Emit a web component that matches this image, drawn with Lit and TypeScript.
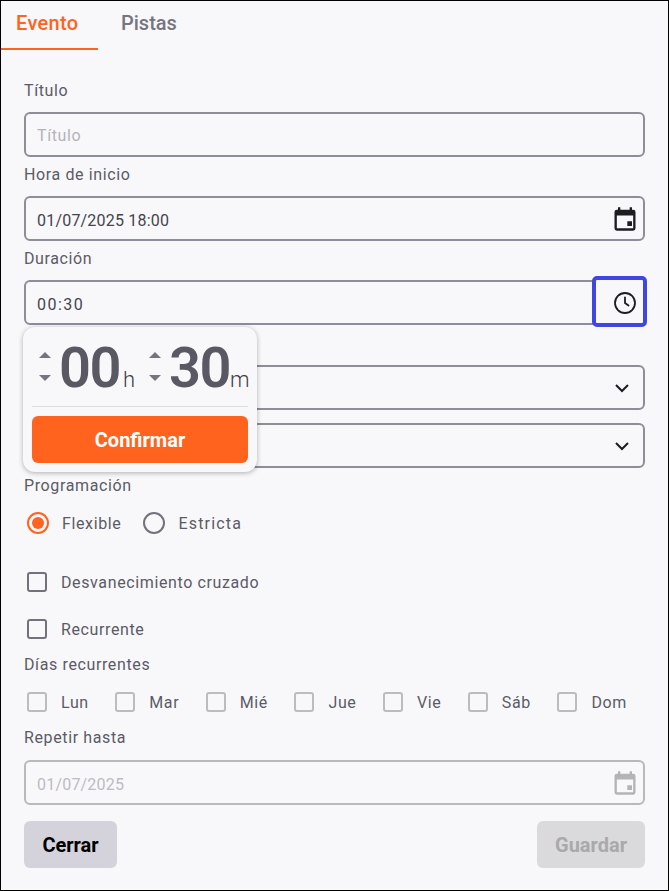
import { LitElement, css, html, svg } from "lit";
import { customElement } from "lit/decorators.js";

const calendarIcon = svg`<path fill="currentColor" d="M19 4h-1V2h-2v2H8V2H6v2H5a2 2 0 0 0-2 2v14a2 2 0 0 0 2 2h14a2 2 0 0 0 2-2V6a2 2 0 0 0-2-2zm0 16H5V9h14v11zm-5-6h4v4h-4z"/>`;

const DAYS = ["Lun", "Mar", "Mié", "Jue", "Vie", "Sáb", "Dom"];

@customElement("app-root")
export class AppRoot extends LitElement {
  static styles = css`
    :host {
      display: block;
      box-sizing: border-box;
      width: 669px;
      height: 891px;
      background: #f8f8fb;
      border: 1px solid #000;
      font-family: Roboto, "Liberation Sans", sans-serif;
      font-size: 16px;
      letter-spacing: 0.62px;
      color: #5c5b65;
    }
    .tabs {
      display: flex;
      height: 49px;
    }
    .tab {
      box-sizing: border-box;
      padding: 10px 20px 0 15px;
      font-size: 20px;
      font-weight: 500;
      letter-spacing: 0;
      color: #75747f;
      line-height: 24px;
    }
    .tab.on {
      width: 97px;
      color: #ff6320;
      letter-spacing: 0.35px;
      border-bottom: 2px solid #ff6320;
    }
    .tab + .tab {
      padding-left: 23px;
    }
    .form {
      position: relative;
      padding: 31px 23px 0 23px;
    }
    .label {
      line-height: 20px;
      margin-bottom: 11px;
      color: #5c5b65;
    }
    .input {
      box-sizing: border-box;
      display: flex;
      align-items: center;
      justify-content: space-between;
      height: 45px;
      margin-bottom: 8px;
      padding: 0 4px 0 11px;
      border: 2px solid #8f8e98;
      border-radius: 6px;
      color: #45444c;
    }
    .val {
      margin-top: 3px;
      letter-spacing: 0.2px;
    }
    .val.wide {
      letter-spacing: 1.5px;
    }
    .val.hint {
      margin-top: 1px;
      letter-spacing: 0.62px;
    }
    .input.placeholder {
      color: #b3b3b8;
    }
    .input.disabled {
      border-color: #b9b9bc;
      color: #bcbcc2;
    }
    .input svg {
      width: 28px;
      height: 28px;
      color: #1d1c22;
    }
    .input.disabled svg {
      color: #b4b4b7;
    }
    .duration {
      position: relative;
    }
    .focus {
      position: absolute;
      top: -4px;
      right: -2px;
      box-sizing: border-box;
      display: flex;
      align-items: center;
      justify-content: center;
      width: 55px;
      height: 51px;
      padding: 2px 0 0 10px;
      border: 4px solid #4046e0;
      border-radius: 5px;
      background: #f8f8fb;
      color: #1d1c22;
    }
    .focus svg {
      width: 24px;
      height: 24px;
    }
    .select {
      margin-top: 40px;
      padding-right: 11px;
    }
    .select + .select {
      margin-top: 13px;
    }
    .input.select svg {
      width: 20px;
      height: 20px;
    }
    .popup {
      position: absolute;
      top: 277px;
      left: 22px;
      box-sizing: border-box;
      width: 234px;
      height: 145px;
      padding: 0 9px;
      border-radius: 12px;
      background: #f8f8fb;
      box-shadow: 0 1px 5px rgba(0, 0, 0, 0.3);
    }
    .time {
      display: flex;
      align-items: flex-end;
      height: 79px;
      padding-left: 7px;
      border-bottom: 1px solid #dcdbe0;
    }
    .spin {
      display: flex;
      flex-direction: column;
      gap: 17px;
      margin: 0 8px 25px 0;
    }
    .arrow {
      width: 0;
      height: 0;
      border-left: 6.5px solid transparent;
      border-right: 6.5px solid transparent;
    }
    .arrow.up {
      border-bottom: 6px solid #75747f;
    }
    .arrow.down {
      border-top: 6px solid #75747f;
    }
    .num {
      font-size: 56px;
      font-weight: 600;
      line-height: 66px;
      letter-spacing: -1.5px;
      color: #5a5963;
      margin-bottom: 5px;
    }
    .unit {
      font-size: 22px;
      font-weight: 300;
      line-height: 26px;
      letter-spacing: 0;
      margin: 0 14px 13px 3px;
      color: #3f3e46;
    }
    .unit.min {
      margin: 0 0 13px 0;
    }
    .confirm {
      margin-top: 9px;
      height: 47px;
      border-radius: 6px;
      background: #ff631e;
      color: #fff;
      font-size: 20px;
      font-weight: 700;
      letter-spacing: 0;
      display: flex;
      align-items: center;
      justify-content: center;
    }
    .radios {
      display: flex;
      align-items: center;
      height: 26px;
      margin: 14px 0 0 3px;
    }
    .radio {
      box-sizing: border-box;
      width: 22px;
      height: 22px;
      margin-right: 13px;
      border: 2px solid #73727c;
      border-radius: 50%;
      flex: none;
    }
    .radio.on {
      border-color: #ff6320;
      display: flex;
      align-items: center;
      justify-content: center;
    }
    .radio.on::after {
      content: "";
      width: 12px;
      height: 12px;
      border-radius: 50%;
      background: #ff6320;
    }
    .radios span {
      margin-right: 22px;
    }
    .radios span:last-child {
      letter-spacing: 1.2px;
    }
    .check {
      display: flex;
      align-items: center;
      gap: 14px;
      margin-left: 3px;
      height: 24px;
    }
    .box {
      box-sizing: border-box;
      width: 20px;
      height: 20px;
      flex: none;
      border: 2.5px solid #73727c;
      border-radius: 3px;
    }
    .cross {
      margin-top: 34px;
    }
    .rec {
      margin-top: 23px;
    }
    .after-rec {
      margin-top: 14px;
    }
    .days {
      display: flex;
      justify-content: space-between;
      margin: 15px 18px 5px 0;
    }
    .days .box {
      border-color: #bcbcbf;
    }
    .repeat-label {
      margin-top: 14px;
      margin-bottom: 12px;
    }
    .actions {
      display: flex;
      justify-content: space-between;
      margin-top: 16px;
    }
    .btn {
      display: flex;
      align-items: center;
      justify-content: center;
      height: 47px;
      border-radius: 6px;
      font-size: 20px;
      font-weight: 700;
      letter-spacing: 0;
    }
    .close {
      width: 93px;
      background: #d4d3db;
      color: #000;
    }
    .save {
      width: 108px;
      background: #dadadc;
      color: #a9a9ac;
    }
  `;

  private calendar() {
    return html`<svg viewBox="0 0 24 24">${calendarIcon}</svg>`;
  }

  private chevron() {
    return html`<svg viewBox="0 0 20 20" fill="none" stroke="currentColor" stroke-width="2">
      <path d="M4 7l6 6 6-6" />
    </svg>`;
  }

  private spinner() {
    return html`<div class="spin"><div class="arrow up"></div><div class="arrow down"></div></div>`;
  }

  render() {
    return html`
      <div class="tabs">
        <div class="tab on">Evento</div>
        <div class="tab">Pistas</div>
      </div>
      <div class="form">
        <div class="label">Título</div>
        <div class="input placeholder"><span class="val hint">Título</span></div>
        <div class="label">Hora de inicio</div>
        <div class="input"><span class="val">01/07/2025 18:00</span>${this.calendar()}</div>
        <div class="label">Duración</div>
        <div class="duration">
          <div class="input"><span class="val wide">00:30</span></div>
          <div class="focus">
            <svg viewBox="0 0 24 24" fill="none" stroke="currentColor" stroke-width="1.8" stroke-linecap="round">
              <circle cx="12" cy="12" r="10" />
              <path d="M12 6.5V12l3.5 2.5" />
            </svg>
          </div>
        </div>
        <div class="input select"><span></span>${this.chevron()}</div>
        <div class="input select"><span></span>${this.chevron()}</div>
        <div class="label">Programación</div>
        <div class="radios">
          <div class="radio on"></div>
          <span>Flexible</span>
          <div class="radio"></div>
          <span>Estricta</span>
        </div>
        <div class="check cross"><div class="box"></div>Desvanecimiento cruzado</div>
        <div class="check rec"><div class="box"></div>Recurrente</div>
        <div class="label after-rec">Días recurrentes</div>
        <div class="days">
          ${DAYS.map((d) => html`<div class="check"><div class="box"></div>${d}</div>`)}
        </div>
        <div class="label repeat-label">Repetir hasta</div>
        <div class="input disabled"><span class="val">01/07/2025</span>${this.calendar()}</div>
        <div class="actions">
          <div class="btn close">Cerrar</div>
          <div class="btn save">Guardar</div>
        </div>
        <div class="popup">
          <div class="time">
            ${this.spinner()}
            <div class="num">00</div>
            <div class="unit">h</div>
            ${this.spinner()}
            <div class="num">30</div>
            <div class="unit min">m</div>
          </div>
          <div class="confirm">Confirmar</div>
        </div>
      </div>
    `;
  }
}
